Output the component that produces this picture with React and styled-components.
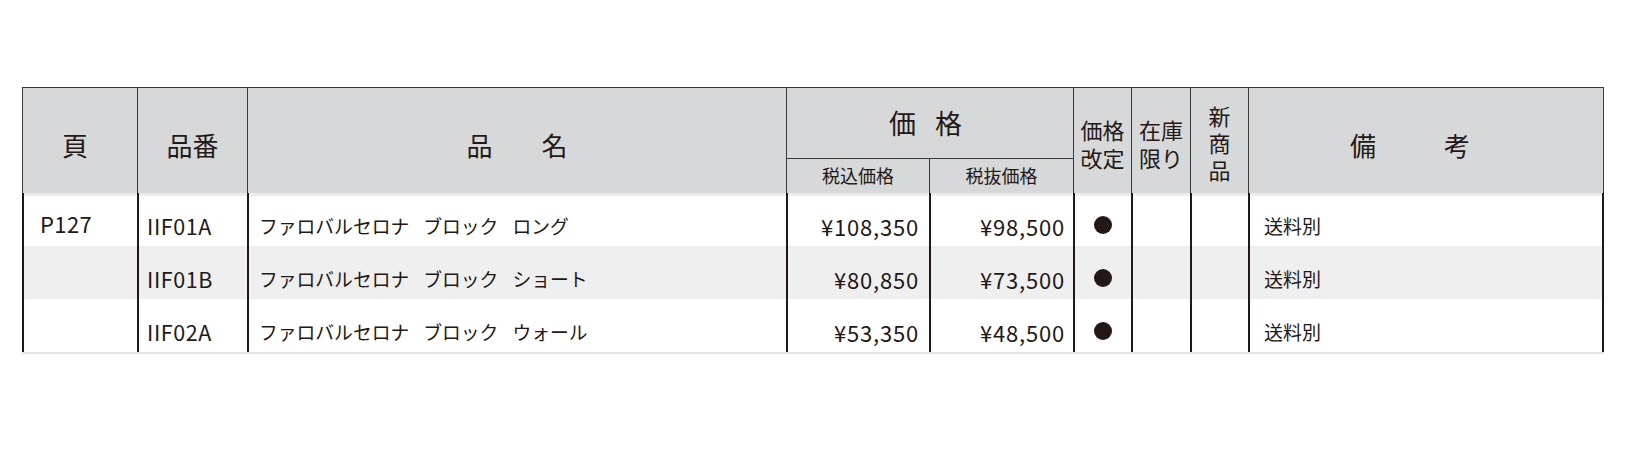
import React from "react";
import styled, { createGlobalStyle } from "styled-components";

const GlobalStyle = createGlobalStyle`
  html, body {
    margin: 0;
    padding: 0;
    background: #ffffff;
  }
  body {
    font-family: "Noto Sans CJK JP", "Noto Sans", sans-serif;
    color: #231815;
  }
`;

const COLS = "115px 110px 539px 143px 144px 58px 59px 58px 356px";

const Page = styled.div`
  padding: 87px 0 0 22px;
  height: 461px;
  box-sizing: border-box;
`;

const Table = styled.div`
  width: 1582px;
`;

const Head = styled.div`
  display: grid;
  grid-template-columns: ${COLS};
  grid-template-rows: 70px 35px;
  background: #d7d8da;
  border-top: 1px solid #3a3a3a;
`;

const HeadCell = styled.div`
  box-sizing: border-box;
  border-left: 1px solid #3a3a3a;
  ${(p) => p.$last && "border-right: 1px solid #3a3a3a;"}
  ${(p) => p.$sub && "border-top: 1px solid #3a3a3a;"}
  grid-row: ${(p) => p.$row || "1 / 3"};
  grid-column: ${(p) => p.$col || "auto"};
  display: flex;
  align-items: center;
  justify-content: center;
  padding-top: ${(p) => p.$pt ?? 8}px;
  padding-left: ${(p) => p.$pl || 0}px;
  padding-right: ${(p) => p.$pr || 0}px;
  font-size: ${(p) => p.$size || 26}px;
  line-height: ${(p) => p.$lh || 1.2};
  text-align: center;
`;

const Spaced = styled.span`
  display: flex;
  gap: ${(p) => p.$gap}px;
`;

const Stack = styled.span`
  display: flex;
  flex-direction: column;
  align-items: center;
  line-height: ${(p) => p.$lh}px;
`;

const Body = styled.div`
  border-bottom: 2px solid #e6e6e6;
`;

const Row = styled.div`
  display: grid;
  grid-template-columns: ${COLS};
  height: 53px;
  background: ${(p) =>
    p.$striped
      ? "#efefef"
      : p.$first
      ? "linear-gradient(#ececec 0 3px, #ffffff 3px)"
      : "#ffffff"};
`;

const Cell = styled.div`
  box-sizing: border-box;
  border-left: 2px solid #231815;
  ${(p) => p.$last && "border-right: 2px solid #231815;"}
  display: flex;
  align-items: center;
  justify-content: ${(p) =>
    p.$align === "right" ? "flex-end" : p.$align === "center" ? "center" : "flex-start"};
  padding: ${(p) => p.$pt ?? 12}px ${(p) => p.$pr || 0}px 0 ${(p) => p.$pl || 0}px;
  font-size: ${(p) => p.$size || 18.8}px;
  letter-spacing: ${(p) => p.$ls || 0}px;
  white-space: pre;
`;

const Words = styled.span`
  display: flex;
  gap: 14px;
`;

const Dot = styled.span`
  width: 18px;
  height: 18px;
  border-radius: 50%;
  background: #231815;
  margin-top: -2px;
`;

const rows = [
  { page: "P127", code: "IIF01A", name: ["ファロバルセロナ", "ブロック", "ロング"], inc: "¥108,350", exc: "¥98,500" },
  { page: "", code: "IIF01B", name: ["ファロバルセロナ", "ブロック", "ショート"], inc: "¥80,850", exc: "¥73,500" },
  { page: "", code: "IIF02A", name: ["ファロバルセロナ", "ブロック", "ウォール"], inc: "¥53,350", exc: "¥48,500" },
];

const App = () => {
  return (
    <Page>
      <GlobalStyle />
      <Table>
        <Head>
          <HeadCell $col="1" $pr={10}>頁</HeadCell>
          <HeadCell $col="2">品番</HeadCell>
          <HeadCell $col="3">
            <Spaced $gap={49}>
              <span>品</span>
              <span>名</span>
            </Spaced>
          </HeadCell>
          <HeadCell $col="4 / 6" $row="1" $size={27} $pt={0} $pr={9}>
            <Spaced $gap={19}>
              <span>価</span>
              <span>格</span>
            </Spaced>
          </HeadCell>
          <HeadCell $col="4" $row="2" $sub $size={18} $pt={0}>税込価格</HeadCell>
          <HeadCell $col="5" $row="2" $sub $size={18} $pt={0}>税抜価格</HeadCell>
          <HeadCell $col="6" $size={22} $pt={4}>
            <Stack $lh={28}>
              <span>価格</span>
              <span>改定</span>
            </Stack>
          </HeadCell>
          <HeadCell $col="7" $size={22} $pt={4}>
            <Stack $lh={28}>
              <span>在庫</span>
              <span>限り</span>
            </Stack>
          </HeadCell>
          <HeadCell $col="8" $size={22} $pt={4}>
            <Stack $lh={27}>
              <span>新</span>
              <span>商</span>
              <span>品</span>
            </Stack>
          </HeadCell>
          <HeadCell $col="9" $last $pr={32}>
            <Spaced $gap={68}>
              <span>備</span>
              <span>考</span>
            </Spaced>
          </HeadCell>
        </Head>
        <Body>
          {rows.map((r, i) => (
            <Row key={r.code} $striped={i === 1} $first={i === 0}>
              <Cell $pl={16} $pt={6} $size={22} $ls={0.4}>{r.page}</Cell>
              <Cell $pl={8} $size={21.5} $ls={0.6}>{r.code}</Cell>
              <Cell $pl={10}>
                <Words>
                  {r.name.map((w) => (
                    <span key={w}>{w}</span>
                  ))}
                </Words>
              </Cell>
              <Cell $align="right" $pr={10} $size={22} $ls={0.8}>{r.inc}</Cell>
              <Cell $align="right" $pr={8} $size={22} $ls={0.8}>{r.exc}</Cell>
              <Cell $align="center"><Dot /></Cell>
              <Cell />
              <Cell />
              <Cell $pl={14} $size={19} $last>送料別</Cell>
            </Row>
          ))}
        </Body>
      </Table>
    </Page>
  );
};

export default App;
